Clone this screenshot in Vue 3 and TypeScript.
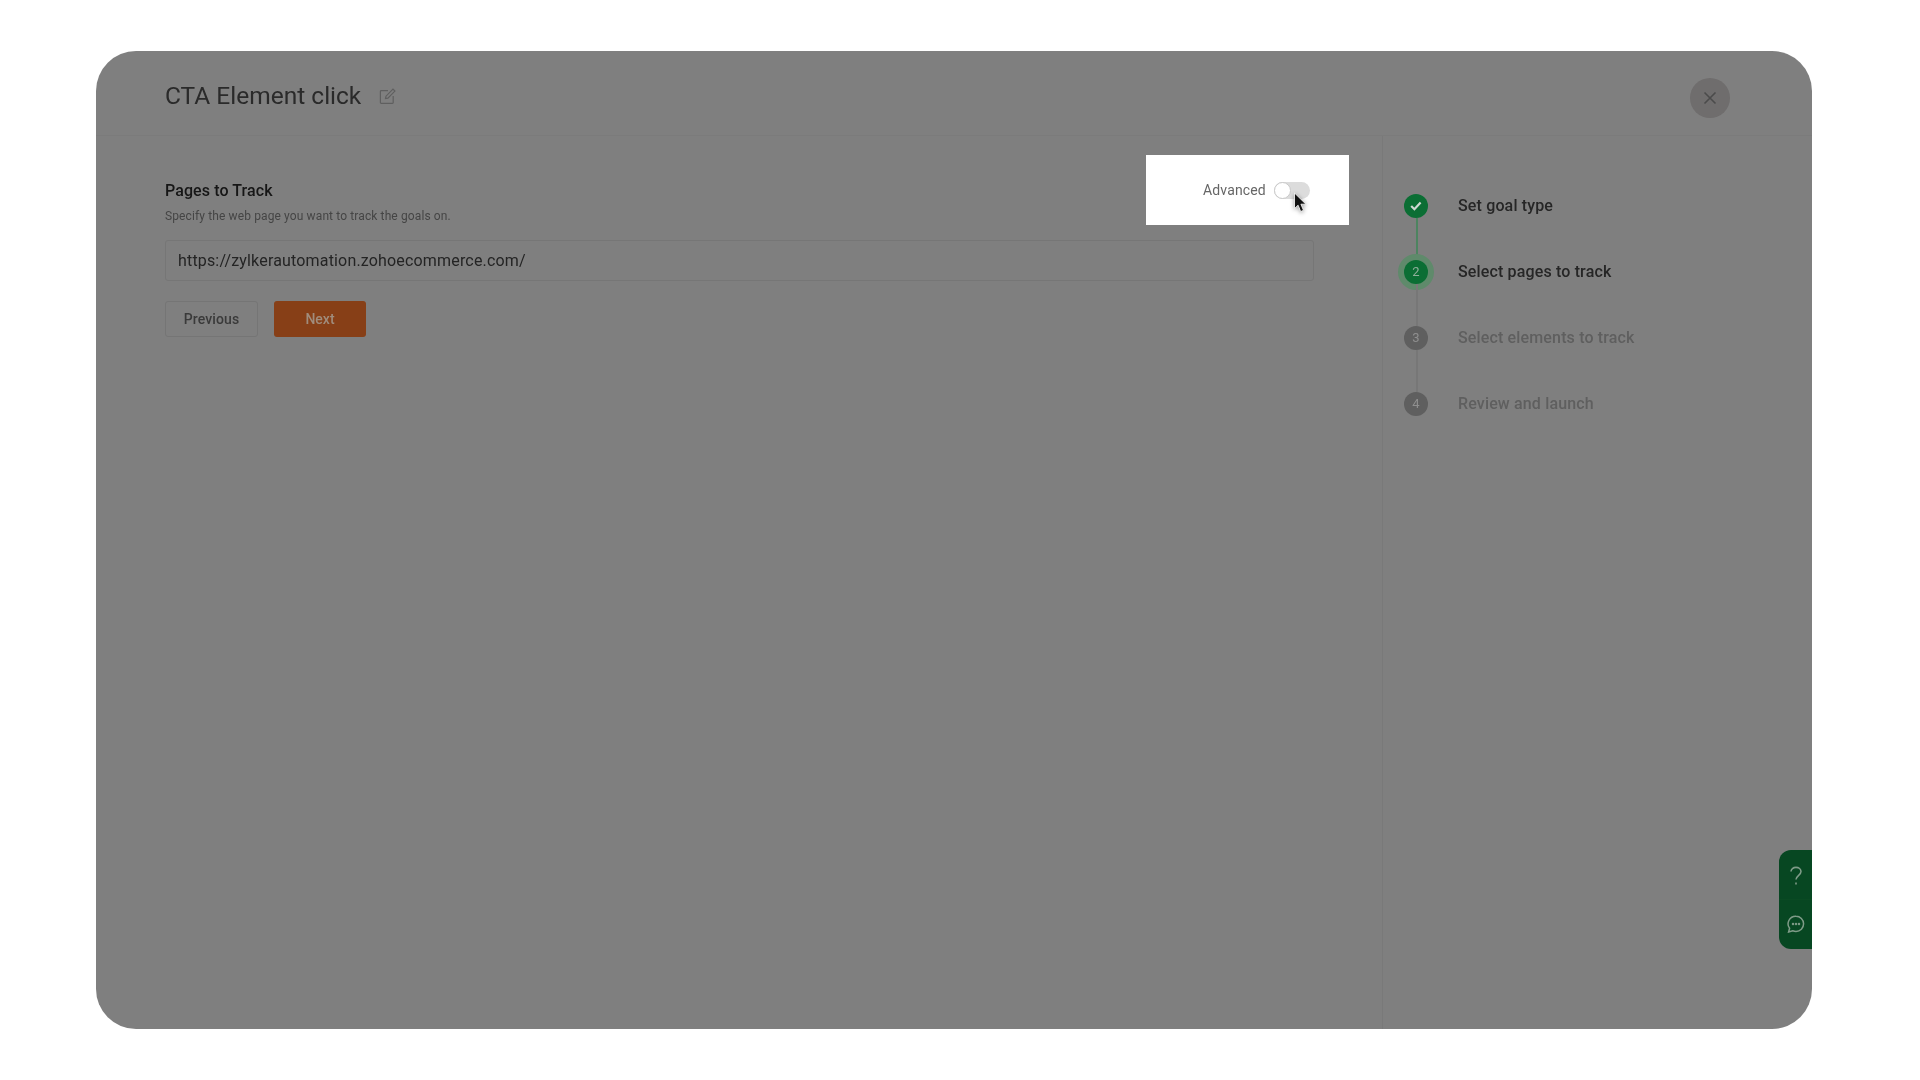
<script setup lang="ts">
interface Step { label: string; num: string; state: 'done' | 'active' | 'todo' }
const steps: Step[] = [
  { label: 'Set goal type', num: '', state: 'done' },
  { label: 'Select pages to track', num: '2', state: 'active' },
  { label: 'Select elements to track', num: '3', state: 'todo' },
  { label: 'Review and launch', num: '4', state: 'todo' },
]
</script>

<template>
  <div class="page">
    <div class="frame">
      <header class="top">
        <h1 class="title">CTA Element click</h1>
        <svg class="edit" width="17" height="17" viewBox="0 0 17 17" fill="none" stroke="#5f5f5f" stroke-width="1.2">
          <path d="M9 2.6H2.2a.8.8 0 0 0-.8.8v11.2a.8.8 0 0 0 .8.8h11.2a.8.8 0 0 0 .8-.8V8" />
          <path d="M6.5 10.6l.5-2.4 7-7 1.9 1.9-7 7z" />
        </svg>
        <button class="close" type="button" aria-label="Close">
          <svg width="14" height="14" viewBox="0 0 14 14" fill="none" stroke="#4b4b4b" stroke-width="1.6">
            <path d="M1.500 1.500l11 11M12.500 1.500l-11 11" />
          </svg>
        </button>
      </header>

      <div class="body">
        <main class="main">
          <div class="head">
            <div class="head-text">
              <h2 class="section">Pages to Track</h2>
              <p class="hint">Specify the web page you want to track the goals on.</p>
            </div>
            <div class="spot">
              <span class="adv">Advanced</span>
              <span class="toggle"><span class="knob"></span></span>
              <svg class="cursor" width="15" height="21" viewBox="0 0 15 21">
                <path d="M1.500 1v15.500l3.600-3.300 2.600 6.300 2.800-1.200-2.600-6.100h5z" fill="#111" stroke="#fff" stroke-width="0.8" />
              </svg>
            </div>
          </div>
          <div class="field">https://zylkerautomation.zohoecommerce.com/</div>
          <div class="actions">
            <button class="btn prev" type="button">Previous</button>
            <button class="btn next" type="button">Next</button>
          </div>
        </main>

        <aside class="side">
          <ol class="steps">
            <li v-for="(s, i) in steps" :key="s.label" class="step" :class="s.state">
              <span class="rail">
                <span class="dot">
                  <svg v-if="s.state === 'done'" width="12" height="10" viewBox="0 0 12 10" fill="none" stroke="#cfd8d2" stroke-width="2.200">
                    <path d="M1.200 5l3.200 3.200 6.200-6.600" />
                  </svg>
                  <template v-else>{{ s.num }}</template>
                </span>
                <span v-if="i < steps.length - 1" class="line"></span>
              </span>
              <span class="label">{{ s.label }}</span>
            </li>
          </ol>
        </aside>
      </div>

      <div class="tabs">
        <div class="tab">
          <svg width="14" height="20" viewBox="0 0 14 20" fill="none" stroke="#7f9b88" stroke-width="1.600">
            <path d="M2 5.600C2 3 4.200 1.400 7 1.400s5 1.700 5 4.200c0 3.600-5 3.800-5 8" />
            <path d="M7 16.400v2.200" />
          </svg>
        </div>
        <div class="tab">
          <svg width="18" height="18" viewBox="0 0 18 18" fill="none" stroke="#7f9b88" stroke-width="1.500">
            <path d="M9 1.200a7.600 7.600 0 0 1 0 15.200c-1.200 0-2.300-.3-3.300-.7L1.600 17l1-3.700A7.600 7.600 0 0 1 9 1.200z" />
            <circle cx="6" cy="9" r=".5" />
            <circle cx="9" cy="9" r=".5" />
            <circle cx="12" cy="9" r=".5" />
          </svg>
        </div>
      </div>
    </div>
  </div>
</template>

<style>
html, body { margin: 0; background: #fff; }
</style>

<style scoped>
.page {
  width: 1920px;
  height: 1080px;
  padding: 51px 108px 51px 96px;
  box-sizing: border-box;
  background: #fff;
  font-family: Roboto, "Liberation Sans", sans-serif;
}
.frame {
  position: relative;
  height: 978px;
  background: #7f7f7f;
  border-radius: 40px;
  overflow: hidden;
  display: flex;
  flex-direction: column;
}
.top {
  height: 85px;
  flex: none;
  box-sizing: border-box;
  border-bottom: 1px solid #7b7b7b;
  padding: 0 82px 0 69px;
  display: flex;
  align-items: center;
  color: #333;
}
.title {
  margin: 6px 0 0;
  font-size: 24.5px;
  font-weight: 400;
  line-height: 32px;
  color: #2a2a2a;
  filter: blur(0.5px);
}
.edit { margin: 6px 0 0 18px; filter: blur(0.4px); }
.close {
  margin: 9px 0 0 auto;
  width: 40px;
  height: 40px;
  border: 0;
  padding: 0;
  border-radius: 50%;
  background: #6f6d6d;
  display: flex;
  align-items: center;
  justify-content: center;
}
.body { flex: 1; display: flex; min-height: 0; }
.main {
  width: 1286px;
  flex: none;
  box-sizing: border-box;
  padding: 19px 68px 0 69px;
}
.head {
  display: flex;
  justify-content: space-between;
  align-items: flex-start;
  height: 85px;
  margin-bottom: 19px;
}
.head-text { padding-top: 25px; filter: blur(0.5px); }
.section {
  margin: 0;
  font-size: 16px;
  font-weight: 500;
  line-height: 22px;
  letter-spacing: 0.1px;
  color: #161616;
}
.hint {
  margin: 6px 0 0;
  font-size: 12px;
  line-height: 16px;
  letter-spacing: 0.12px;
  color: #454545;
}
.spot {
  position: relative;
  width: 203px;
  height: 70px;
  margin-right: -35px;
  background: #fff;
  display: flex;
  align-items: center;
  box-sizing: border-box;
  padding-left: 57px;
}
.adv { font-size: 14px; letter-spacing: 0.15px; color: #666; line-height: 20px; filter: blur(0.4px); }
.toggle {
  width: 36px;
  height: 17px;
  margin-left: 8px;
  border-radius: 9px;
  background: #dcdcdc;
  display: block;
}
.knob {
  display: block;
  width: 15px;
  height: 15px;
  border: 1px solid #c9c9c9;
  border-radius: 50%;
  background: #fff;
  box-sizing: content-box;
}
.cursor {
  position: absolute;
  left: 147px;
  top: 37px;
  filter: drop-shadow(0 1px 2px rgba(0, 0, 0, 0.4));
}
.field {
  height: 41px;
  box-sizing: border-box;
  margin-top: -19px;
  border: 1px solid #767676;
  border-radius: 3px;
  padding: 0 12px;
  display: flex;
  align-items: center;
  font-size: 16px;
  letter-spacing: 0.17px;
  color: #242424;
  filter: blur(0.5px);
}
.actions { display: flex; gap: 16px; margin-top: 20px; }
.btn {
  height: 36px;
  border-radius: 3px;
  font-family: inherit;
  font-size: 14px;
  font-weight: 500;
  padding: 0;
  filter: blur(0.5px);
}
.prev { width: 93px; background: transparent; border: 1px solid #757575; color: #3a3a3a; letter-spacing: 0.1px; }
.next { width: 92px; background: #873f17; border: 0; color: #a08c7c; }
.side {
  flex: 1;
  border-left: 1px solid #797979;
  padding: 58px 0 0 21px;
}
.steps { list-style: none; margin: 0; padding: 0; }
.step {
  display: flex;
  align-items: flex-start;
  height: 65.9px;
  filter: blur(0.4px);
}
.rail {
  position: relative;
  width: 24px;
  flex: none;
  height: 100%;
  display: flex;
  flex-direction: column;
  align-items: center;
}
.dot {
  width: 24px;
  height: 24px;
  flex: none;
  border-radius: 50%;
  background: #5f5f5f;
  color: #8f8f8f;
  font-size: 13px;
  display: flex;
  align-items: center;
  justify-content: center;
}
.done .dot, .active .dot { background: #0b6e34; }
.active .dot { box-shadow: 0 0 0 6px #5f8a6b; color: #8fae9a; }
.line {
  flex: 1;
  width: 2px;
  background: #777;
  margin-left: 2px;
}
.done .line { background: #4d8460; }
.label {
  margin-left: 30px;
  font-size: 16px;
  font-weight: 500;
  line-height: 24px;
  letter-spacing: 0.15px;
  color: #5f5f5f;
}
.done .label, .active .label { color: #262626; }
.tabs {
  position: absolute;
  right: 0;
  top: 799px;
  width: 33px;
  height: 99px;
  background: #074722;
  border-radius: 12px 0 0 12px;
  display: flex;
  flex-direction: column;
}
.tab {
  flex: 1;
  display: flex;
  align-items: center;
  justify-content: center;
  padding-top: 2px;
}
.tab + .tab { border-top: 1px solid #0a4a23; padding-top: 0; padding-bottom: 2px; }
</style>
